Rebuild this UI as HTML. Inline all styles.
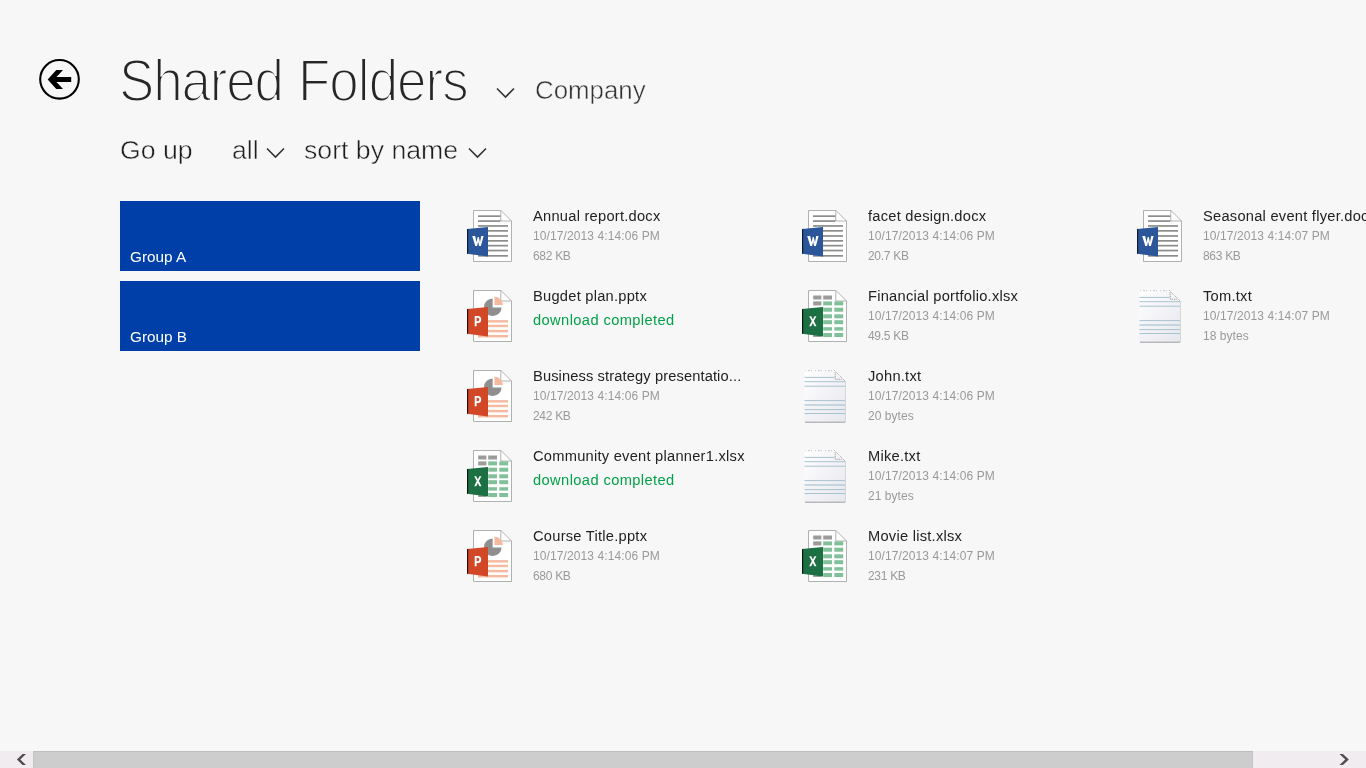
<!DOCTYPE html>
<html><head><meta charset="utf-8">
<style>
html,body{margin:0;padding:0;width:1366px;height:768px;overflow:hidden;background:#f7f7f7;font-family:"Liberation Sans",sans-serif;}
.a{position:absolute;white-space:nowrap;line-height:1;transform:translateZ(0);}
.nm,.dt,.sz,.dl,.grp span{transform:translateZ(0);}
.title{top:51px;font-size:59.5px;color:#262626;transform-origin:0 0;transform:scaleX(0.89) translateZ(0);letter-spacing:-1.3px;-webkit-text-stroke:2.1px #f7f7f7;}
.sub{font-size:26.67px;color:#1e1e1e;-webkit-text-stroke:0.5px #f7f7f7;transform:translateZ(0);}
.chev{position:absolute;}
.grp{position:absolute;left:120px;width:300px;height:70px;background:#003ea8;}
.grp span{position:absolute;left:10px;bottom:7px;font-size:15.3px;color:#fff;line-height:1;}
.it{position:absolute;width:320px;height:60px;}
.it svg{position:absolute;left:0;top:0;}
.nm{position:absolute;left:67px;top:1px;letter-spacing:0.25px;font-size:14.67px;color:#222;line-height:1;white-space:nowrap;}
.dt{position:absolute;left:67px;top:22.3px;letter-spacing:0.1px;font-size:12px;color:#999;line-height:1;white-space:nowrap;}
.sz{position:absolute;left:67px;top:42.3px;letter-spacing:-0.3px;font-size:12px;color:#999;line-height:1;white-space:nowrap;}
.dl{position:absolute;left:67px;top:24.5px;letter-spacing:0.4px;font-size:14.67px;color:#00a148;line-height:1;white-space:nowrap;}
.sb{position:absolute;left:0;top:751px;width:1366px;height:17px;background:#f0ecf0;}
.thumb{position:absolute;left:33px;top:751px;width:1218px;height:16px;background:#cdcdcd;border:1px solid #c4c4c4;border-bottom:0;border-top-color:#bdbdbd;}
</style></head><body>
<svg width="0" height="0" style="position:absolute">
<defs>
<symbol id="page" viewBox="0 0 50 56">
  <path d="M7.5 2.5 H35 L45.5 13 V53.5 H7.5 Z" fill="#fff" stroke="#b0b0b0" stroke-width="1"/>
  <path d="M34.8 2.5 V13 H45.5" fill="none" stroke="#a9a9a9" stroke-width="0.9"/>
</symbol>
<symbol id="word" viewBox="0 0 50 56">
  <use href="#page"/>
  <g fill="#8c8c8a">
    <rect x="12" y="7.3" width="22.5" height="1.7"/>
    <rect x="12" y="12.2" width="22.5" height="1.7"/>
    <rect x="12" y="17.1" width="30" height="1.7"/>
    <rect x="12" y="22" width="30" height="1.7"/>
    <rect x="12" y="27.1" width="30" height="1.7"/>
    <rect x="12" y="32" width="30" height="1.7"/>
    <rect x="12" y="36.8" width="30" height="1.7"/>
    <rect x="12" y="41.7" width="30" height="1.7"/>
    <rect x="12" y="47" width="30" height="1.7"/>
  </g>
  <path d="M1 21 L22 18.9 V48.5 L1 45.7 Z" fill="#2b579a"/>
  <rect x="1" y="21" width="1.2" height="24.7" fill="#0e1a2e"/>
  <path d="M6.2 28 H9.2 L10.5 34.3 L11.7 29 H12.8 L14 34.3 L15.2 28 H17.6 L14.9 38 H13.1 L12.15 33.4 L11.1 38 H9.3 Z" fill="#fff"/>
</symbol>
<symbol id="ppt" viewBox="0 0 50 56">
  <use href="#page"/>
  <path d="M26.6 19.4 V10.4 A8.8 8.8 0 1 0 35.6 19.4 Z" fill="#8f8f8f"/>
  <path d="M28.5 17 V8.7 A8.3 8.3 0 0 1 36.8 17 Z" fill="#f5b99f"/>
  <g fill="#f5b99f">
    <rect x="12" y="32.1" width="30" height="2.4"/>
    <rect x="12" y="36.8" width="30" height="2.4"/>
    <rect x="12" y="41.9" width="30" height="2.4"/>
    <rect x="12" y="47" width="30" height="2.4"/>
  </g>
  <path d="M1 21 L22 18.9 V48.5 L1 45.7 Z" fill="#d24726"/>
  <rect x="1" y="21" width="1.2" height="24.7" fill="#2a0e08"/>
  <path d="M8.7 28 H12 Q15.2 28 15.2 31.5 Q15.2 35 12 35 H10.6 V38.2 H8.7 Z M10.6 29.8 V33.2 H11.8 Q13.3 33.2 13.3 31.5 Q13.3 29.8 11.8 29.8 Z" fill="#fff"/>
</symbol>
<symbol id="xls" viewBox="0 0 50 56">
  <use href="#page"/>
  <g fill="#9b9b9b">
    <rect x="12.2" y="7.5" width="8.2" height="4"/>
    <rect x="22.2" y="7.5" width="8.8" height="4"/>
    <rect x="12.2" y="13.4" width="8.2" height="4"/>
    <rect x="12.2" y="45" width="8.2" height="4"/>
  </g>
  <g fill="#80c09a">
    <rect x="22.2" y="13.4" width="8.8" height="4"/>
    <rect x="33.3" y="13.4" width="8.9" height="4"/>
    <rect x="22.2" y="19.7" width="8.8" height="4"/>
    <rect x="33.3" y="19.7" width="8.9" height="4"/>
    <rect x="22.2" y="26.3" width="8.8" height="4"/>
    <rect x="33.3" y="26.3" width="8.9" height="4"/>
    <rect x="22.2" y="32.2" width="8.8" height="4"/>
    <rect x="33.3" y="32.2" width="8.9" height="4"/>
    <rect x="22.2" y="39.2" width="8.8" height="3.4"/>
    <rect x="33.3" y="39.2" width="8.9" height="3.4"/>
    <rect x="22.2" y="45" width="8.8" height="4"/>
    <rect x="33.3" y="45" width="8.9" height="4"/>
  </g>
  <path d="M1 21 L22 18.9 V48.5 L1 45.7 Z" fill="#1d7044"/>
  <rect x="1" y="21" width="1.2" height="24.7" fill="#06180e"/>
  <path d="M8.2 28.2 H10.2 L11.85 31.4 L13.5 28.2 H15.4 L12.9 33.1 L15.5 38.2 H13.5 L11.85 34.9 L10.2 38.2 H8.2 L10.8 33.1 Z" fill="#fff"/>
</symbol>
<symbol id="txt" viewBox="0 0 50 56">
  <defs>
    <linearGradient id="tg" x1="0" y1="0" x2="1" y2="1">
      <stop offset="0" stop-color="#ffffff"/>
      <stop offset="1" stop-color="#e6e6ee"/>
    </linearGradient>
  </defs>
  <path d="M4 3 H34 L44.5 13.5 V54 Q44.5 55 43.5 55 H4 Z" fill="#b8b8bc"/>
  <path d="M3.3 2 H33.5 L44 12.5 V53.5 H3.3 Z" fill="url(#tg)"/>
  <path d="M4 2.7 H33" stroke="#9a9a9a" stroke-width="0.8" stroke-dasharray="1 2 2 1 1 3" opacity="0.7"/><path d="M34.2 4.3 V11.3 H40.5" fill="none" stroke="#777" stroke-width="0.9" stroke-dasharray="1 0.8" opacity="0.8"/><path d="M33.3 2.4 L44 13" stroke="#9c9ca0" stroke-width="0.9" stroke-dasharray="1 1"/>
  <g fill="#a8c4d0">
    <rect x="3.5" y="8.9" width="30" height="1"/>
    <rect x="3.5" y="13.2" width="40.5" height="1"/>
    <rect x="3.5" y="17.7" width="40.5" height="1"/>
    <rect x="3.5" y="32.1" width="40.5" height="1"/>
    <rect x="3.5" y="36.4" width="40.5" height="1.2"/>
    <rect x="3.5" y="41.1" width="40.5" height="1"/>
    <rect x="3.5" y="45" width="40.5" height="1"/>
  </g>
</symbol>
</defs>
</svg>

<!-- back button -->
<svg class="chev" style="left:36px;top:56px" width="48" height="48" viewBox="0 0 48 48">
  <circle cx="23.5" cy="23.3" r="19.3" fill="none" stroke="#000" stroke-width="2.1"/>
  <path d="M11.7 23.4 L20.3 14 H27 L20.5 21 H35.2 V25.9 H20.5 L27 33 H20.3 Z" fill="#000"/>
</svg>

<div class="a title" id="t1" style="left:119px">Shared</div><div class="a title" id="t2" style="left:298.3px;letter-spacing:-1.1px">Folders</div>
<svg class="chev" style="left:496px;top:87px" width="19" height="12" viewBox="0 0 19 12"><path d="M1 1.5 L9.5 10 L18 1.5" fill="none" stroke="#333" stroke-width="1.6"/></svg>
<div class="a sub" style="left:534.5px;top:76.5px;color:#333;transform:scaleX(0.97) translateZ(0);transform-origin:0 0">Company</div>

<div class="a sub" style="left:120px;top:137px">Go up</div>
<div class="a sub" style="left:232px;top:137px">all</div>
<svg class="chev" style="left:266px;top:147px" width="19" height="12" viewBox="0 0 19 12"><path d="M1 1.5 L9.5 10 L18 1.5" fill="none" stroke="#333" stroke-width="1.6"/></svg>
<div class="a sub" style="left:304px;top:137px">sort by name</div>
<svg class="chev" style="left:468px;top:147px" width="19" height="12" viewBox="0 0 19 12"><path d="M1 1.5 L9.5 10 L18 1.5" fill="none" stroke="#333" stroke-width="1.6"/></svg>

<div class="grp" style="top:201px"><span>Group A</span></div>
<div class="grp" style="top:281px"><span>Group B</span></div>

<!-- column 1 -->
<div class="it" style="left:466px;top:208px"><svg width="50" height="56"><use href="#word"/></svg><div class="nm">Annual report.docx</div><div class="dt">10/17/2013 4:14:06 PM</div><div class="sz">682 KB</div></div>
<div class="it" style="left:466px;top:288px"><svg width="50" height="56"><use href="#ppt"/></svg><div class="nm">Bugdet plan.pptx</div><div class="dl">download completed</div></div>
<div class="it" style="left:466px;top:368px"><svg width="50" height="56"><use href="#ppt"/></svg><div class="nm" style="letter-spacing:0.12px">Business strategy presentatio...</div><div class="dt">10/17/2013 4:14:06 PM</div><div class="sz">242 KB</div></div>
<div class="it" style="left:466px;top:448px"><svg width="50" height="56"><use href="#xls"/></svg><div class="nm">Community event planner1.xlsx</div><div class="dl">download completed</div></div>
<div class="it" style="left:466px;top:528px"><svg width="50" height="56"><use href="#ppt"/></svg><div class="nm">Course Title.pptx</div><div class="dt">10/17/2013 4:14:06 PM</div><div class="sz">680 KB</div></div>

<!-- column 2 -->
<div class="it" style="left:801px;top:208px"><svg width="50" height="56"><use href="#word"/></svg><div class="nm">facet design.docx</div><div class="dt">10/17/2013 4:14:06 PM</div><div class="sz">20.7 KB</div></div>
<div class="it" style="left:801px;top:288px"><svg width="50" height="56"><use href="#xls"/></svg><div class="nm">Financial portfolio.xlsx</div><div class="dt">10/17/2013 4:14:06 PM</div><div class="sz">49.5 KB</div></div>
<div class="it" style="left:801px;top:368px"><svg width="50" height="56"><use href="#txt"/></svg><div class="nm">John.txt</div><div class="dt">10/17/2013 4:14:06 PM</div><div class="sz" style="letter-spacing:0.05px">20 bytes</div></div>
<div class="it" style="left:801px;top:448px"><svg width="50" height="56"><use href="#txt"/></svg><div class="nm">Mike.txt</div><div class="dt">10/17/2013 4:14:06 PM</div><div class="sz" style="letter-spacing:0.05px">21 bytes</div></div>
<div class="it" style="left:801px;top:528px"><svg width="50" height="56"><use href="#xls"/></svg><div class="nm">Movie list.xlsx</div><div class="dt">10/17/2013 4:14:07 PM</div><div class="sz">231 KB</div></div>

<!-- column 3 -->
<div class="it" style="left:1136px;top:208px"><svg width="50" height="56"><use href="#word"/></svg><div class="nm">Seasonal event flyer.docx</div><div class="dt">10/17/2013 4:14:07 PM</div><div class="sz">863 KB</div></div>
<div class="it" style="left:1136px;top:288px"><svg width="50" height="56"><use href="#txt"/></svg><div class="nm">Tom.txt</div><div class="dt">10/17/2013 4:14:07 PM</div><div class="sz" style="letter-spacing:0.05px">18 bytes</div></div>

<!-- scrollbar -->
<div class="sb"></div>
<div class="thumb"></div>
<svg class="chev" style="left:14px;top:753px" width="14" height="14" viewBox="0 0 14 14"><path d="M12 1 H8.6 L2.9 6.5 L8.6 12 H12 L6.3 6.5 Z" fill="#4b4e4b"/></svg>
<svg class="chev" style="left:1338px;top:753px" width="14" height="14" viewBox="0 0 14 14"><path d="M1.5 1 H4.9 L10.8 6.5 L4.9 12 H1.5 L7.3 6.5 Z" fill="#4b4e4b"/></svg>
</body></html>
